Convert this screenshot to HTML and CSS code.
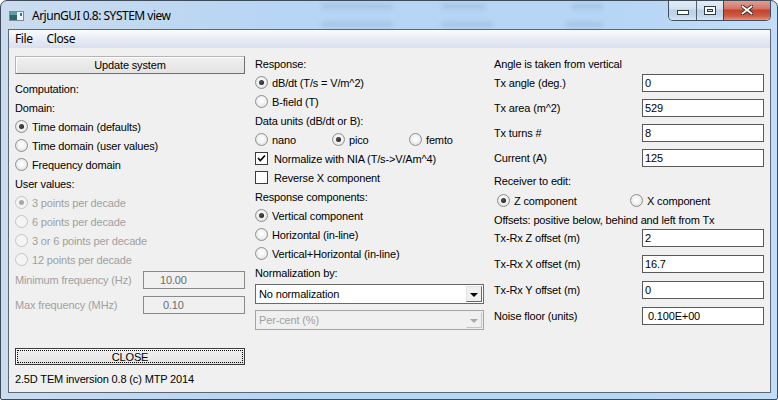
FILE: index.html
```html
<!DOCTYPE html>
<html lang="en">
<head>
    <meta charset="UTF-8">
    <title>ArjunGUI 0.8: SYSTEM view</title>
    <link rel="stylesheet" href="styles.css">
</head>
<body>
    <div class="window">
        <div class="titlebar">
            <svg class="app-icon" width="15" height="10" viewBox="0 0 15 10">
                <rect x="0.5" y="0.5" width="14" height="9" fill="#eef2f6" stroke="#7d8a97"/>
                <rect x="1" y="1" width="7" height="8" fill="#2f6470"/>
                <rect x="1" y="1" width="7" height="3" fill="#5f9ca4"/>
                <rect x="11" y="2" width="2" height="3" fill="#2a6fd6"/>
            </svg>
            <span class="title">ArjunGUI 0.8: SYSTEM view</span>
            <span class="ghost g1"></span>
            <span class="ghost g2"></span>
            <span class="ghost g3"></span>
            <span class="ghost g4"></span>
            <span class="ghost g5"></span>
            <span class="ghost g6"></span>
            <div class="caption">
                <div class="cap cap-min">
                    <svg width="12" height="5" viewBox="0 0 12 5"><rect x="0.5" y="0.5" width="11" height="4" fill="#fff" stroke="#2d3a48"/></svg>
                </div>
                <div class="cap cap-max">
                    <svg width="12" height="9" viewBox="0 0 12 9"><rect x="0.5" y="0.5" width="11" height="8" fill="#fff" stroke="#2d3a48"/><rect x="3.5" y="3.5" width="5" height="2" fill="#c9dbee" stroke="#2d3a48"/></svg>
                </div>
                <div class="cap cap-close">
                    <svg width="12" height="10" viewBox="0 0 12 10"><path d="M1.5 1.5 L10.5 8.5 M10.5 1.5 L1.5 8.5" stroke="#3a2220" stroke-width="3.6" stroke-linecap="square"/><path d="M1.5 1.5 L10.5 8.5 M10.5 1.5 L1.5 8.5" stroke="#fff" stroke-width="1.8" stroke-linecap="square"/></svg>
                </div>
            </div>
        </div>

        <div class="client">
            <div class="menubar">
                <span class="menu-item">File</span>
                <span class="menu-item">Close</span>
            </div>

            <div class="content">
                <div class="col col-left">
                    <div class="btn btn-update">Update system</div>
                    <div class="row first">Computation:</div>
                    <div class="row">Domain:</div>
                    <div class="row"><span class="rb on"></span>Time domain (defaults)</div>
                    <div class="row"><span class="rb"></span>Time domain (user values)</div>
                    <div class="row"><span class="rb"></span>Frequency domain</div>
                    <div class="row">User values:</div>
                    <div class="row dim"><span class="rb on dis"></span>3 points per decade</div>
                    <div class="row dim"><span class="rb dis"></span>6 points per decade</div>
                    <div class="row dim"><span class="rb dis"></span>3 or 6 points per decade</div>
                    <div class="row dim"><span class="rb dis"></span>12 points per decade</div>
                    <div class="field field-first">
                        <span class="flabel dim">Minimum frequency (Hz)</span>
                        <span class="box box-dis">10.00</span>
                    </div>
                    <div class="field">
                        <span class="flabel dim">Max frequency (MHz)</span>
                        <span class="box box-dis">&nbsp;0.10</span>
                    </div>
                    <div class="btn btn-close"><span>CLOSE</span></div>
                    <div class="row footer">2.5D TEM inversion 0.8 (c) MTP 2014</div>
                </div>

                <div class="col col-mid">
                    <div class="row">Response:</div>
                    <div class="row"><span class="rb on"></span>dB/dt (T/s = V/m^2)</div>
                    <div class="row"><span class="rb"></span>B-field (T)</div>
                    <div class="row">Data units (dB/dt or B):</div>
                    <div class="row">
                        <span class="opt opt-nano"><span class="rb"></span>nano</span>
                        <span class="opt opt-pico"><span class="rb on"></span>pico</span>
                        <span class="opt"><span class="rb"></span>femto</span>
                    </div>
                    <div class="row"><span class="cb on"><svg width="11" height="11" viewBox="0 0 11 11"><path d="M2 5 L4.3 7.5 L9 2.5" fill="none" stroke="#000" stroke-width="1.6"/></svg></span>Normalize with NIA (T/s-&gt;V/Am^4)</div>
                    <div class="row"><span class="cb"></span>Reverse X component</div>
                    <div class="row">Response components:</div>
                    <div class="row"><span class="rb on"></span>Vertical component</div>
                    <div class="row"><span class="rb"></span>Horizontal (in-line)</div>
                    <div class="row"><span class="rb"></span>Vertical+Horizontal (in-line)</div>
                    <div class="row">Normalization by:</div>
                    <div class="sel sel-first">
                        <span>No normalization</span>
                        <span class="arrow"></span>
                    </div>
                    <div class="sel sel-dis">
                        <span>Per-cent (%)</span>
                        <span class="arrow"></span>
                    </div>
                </div>

                <div class="col col-right">
                    <div class="row">Angle is taken from vertical</div>
                    <div class="field wide field-tx">
                        <span class="flabel">Tx angle (deg.)</span>
                        <span class="box">0</span>
                    </div>
                    <div class="field wide">
                        <span class="flabel">Tx area (m^2)</span>
                        <span class="box">529</span>
                    </div>
                    <div class="field wide">
                        <span class="flabel">Tx turns #</span>
                        <span class="box">8</span>
                    </div>
                    <div class="field wide">
                        <span class="flabel">Current (A)</span>
                        <span class="box">125</span>
                    </div>
                    <div class="row receiver">Receiver to edit:</div>
                    <div class="row rx-row">
                        <span class="opt opt-z"><span class="rb on"></span>Z component</span>
                        <span class="opt"><span class="rb"></span>X component</span>
                    </div>
                    <div class="row">Offsets: positive below, behind and left from Tx</div>
                    <div class="field wide field-off">
                        <span class="flabel">Tx-Rx Z offset (m)</span>
                        <span class="box">2</span>
                    </div>
                    <div class="field wide field-gap">
                        <span class="flabel">Tx-Rx X offset (m)</span>
                        <span class="box">16.7</span>
                    </div>
                    <div class="field wide field-gap">
                        <span class="flabel">Tx-Rx Y offset (m)</span>
                        <span class="box">0</span>
                    </div>
                    <div class="field wide field-gap">
                        <span class="flabel">Noise floor (units)</span>
                        <span class="box">&nbsp;0.100E+00</span>
                    </div>
                </div>
            </div>
        </div>
    </div>
</body>
</html>
```

FILE: styles.css
```css
body {
    margin: 0;
    font-family: "Liberation Sans", Arial, sans-serif;
    font-size: 11px;
    color: #000;
    background: #fff;
}

/* window frame */

.window {
    width: 778px;
    height: 400px;
    box-sizing: border-box;
    border: 1px solid #3e4b5a;
    border-radius: 7px 7px 2px 2px;
    background: linear-gradient(to right, #cbdcee, #b7d5f4 35%, #b6d6f5 80%, #c4ddf6);
    display: flex;
    flex-direction: column;
    overflow: hidden;
}

.titlebar {
    position: relative;
    height: 28px;
    flex: none;
    display: flex;
    align-items: flex-start;
}

.app-icon {
    margin: 10px 0 0 8px;
}

.title {
    margin: 6px 0 0 8px;
    font-family: "Noto Sans", sans-serif;
    font-size: 12px;
    letter-spacing: -0.5px;
    line-height: 17px;
}

.ghost {
    position: absolute;
    height: 5px;
    border-radius: 3px;
    background: rgba(100, 130, 170, 0.2);
    filter: blur(2px);
}

.g1 { left: 320px; top: 3px; width: 72px; }
.g2 { left: 320px; top: 21px; width: 72px; }
.g3 { left: 440px; top: 3px; width: 45px; }
.g4 { left: 440px; top: 21px; width: 52px; }
.g5 { left: 570px; top: 3px; width: 32px; }
.g6 { left: 565px; top: 21px; width: 37px; }

.caption {
    margin-left: auto;
    margin-right: 6px;
    margin-top: -1px;
    display: flex;
    border: 1px solid #3f4e60;
    border-top: none;
    border-radius: 0 0 5px 5px;
    overflow: hidden;
}

.cap {
    height: 20px;
    display: flex;
    align-items: center;
    justify-content: center;
    background: linear-gradient(#e4edf7, #d3e1f0 45%, #bccfe6 50%, #c3d7ec 80%, #d6e6f6);
}

.cap-min {
    width: 27px;
}

.cap-min svg {
    margin-top: 5px;
}

.cap-max {
    width: 26px;
    border-left: 1px solid #4f5f72;
}

.cap-close {
    width: 46px;
    border-left: 1px solid #5a3a3a;
    background: linear-gradient(#e4a497, #d27462 45%, #c2432f 50%, #cf5a41 80%, #e79280);
}

/* client area */

.client {
    flex: 1;
    margin: 0 6px 6px 7px;
    border: 1px solid #5d6876;
    background: #f0f0f0;
    display: flex;
    flex-direction: column;
}

.menubar {
    height: 18px;
    flex: none;
    display: flex;
    font-family: "Noto Sans", sans-serif;
    font-size: 12px;
    letter-spacing: -0.4px;
    line-height: 18px;
    background: linear-gradient(#fbfcfe, #e8ecf5 50%, #d9e0ee);
}

.menu-item {
    margin-left: 6px;
}

.menu-item + .menu-item {
    margin-left: 14px;
}

.content {
    flex: 1;
    display: grid;
    grid-template-columns: 230px 229px 1fr;
    column-gap: 10px;
    padding: 0 6px 0 6px;
    letter-spacing: -0.15px;
}

.col {
    display: flex;
    flex-direction: column;
}

.col-left {
    padding-top: 8px;
}

.col-mid,
.col-right {
    padding-top: 6px;
}

.row {
    height: 19px;
    display: flex;
    align-items: center;
    white-space: nowrap;
}

.row.first {
    margin-top: 5px;
}

.dim {
    color: #a0a0a0;
}

/* radio buttons and check boxes */

.rb {
    width: 13px;
    height: 13px;
    box-sizing: border-box;
    flex: none;
    border-radius: 50%;
    border: 1px solid #8e8f8f;
    background: radial-gradient(circle at 50% 45%, #ffffff 0, #f3f3f3 45%, #d2d2d2 100%);
    display: inline-flex;
    align-items: center;
    justify-content: center;
    margin-right: 4px;
}

.rb.on::after {
    content: "";
    width: 5px;
    height: 5px;
    border-radius: 50%;
    background: radial-gradient(circle at 40% 40%, #555, #111);
}

.rb.dis {
    border-color: #c4c4c4;
    background: #f4f4f4;
}

.rb.dis.on::after {
    background: #a8a8a8;
}

.cb {
    width: 13px;
    height: 13px;
    box-sizing: border-box;
    flex: none;
    border: 1px solid #3c3c3c;
    background: #fff;
    display: inline-flex;
    align-items: center;
    justify-content: center;
    margin-right: 6px;
}

.opt {
    display: flex;
    align-items: center;
}

.opt-nano,
.opt-pico {
    width: 77px;
}

.opt-z {
    width: 133px;
    margin-left: 3px;
}

.rx-row {
    margin-top: 1px;
}

.receiver {
    margin-top: 4px;
}

/* buttons */

.btn {
    box-sizing: border-box;
    display: flex;
    align-items: center;
    justify-content: center;
    background: linear-gradient(#f0f0f0, #e3e3e3);
    border: 1px solid;
    border-color: #b4b4b4 #6e6e6e #6e6e6e #b4b4b4;
    box-shadow: inset 1px 1px 0 #fff;
}

.btn-update {
    height: 18px;
}

.btn-close {
    height: 17px;
    margin-top: 34px;
    border-color: #3a3a3a;
    outline: 1px dotted #000;
    outline-offset: -3px;
}

.footer {
    margin-top: 4px;
}

/* edit fields */

.field {
    height: 18px;
    display: flex;
    align-items: center;
    margin-top: 7px;
}

.field-first {
    margin-top: 2px;
}

.flabel {
    width: 128px;
    flex: none;
    white-space: nowrap;
}

.wide .flabel {
    width: 148px;
}

.field-tx {
    margin-top: 1px;
}

.field-off {
    margin-top: 0;
}

.field-gap {
    margin-top: 8px;
}

.box {
    flex: 1;
    height: 18px;
    box-sizing: border-box;
    border: 1px solid #595959;
    background: #fff;
    padding-left: 2px;
    line-height: 16px;
    white-space: nowrap;
}

.box-dis {
    background: #f0f0f0;
    border-color: #8a8a8a;
    color: #6d6d6d;
    padding-left: 16px;
}

/* drop-down lists */

.sel {
    height: 20px;
    box-sizing: border-box;
    border: 1px solid #6a6a6a;
    background: #fff;
    display: flex;
    align-items: center;
    padding-left: 3px;
    margin-top: 6px;
}

.sel-first {
    margin-top: 2px;
}

.arrow {
    margin-left: auto;
    margin-right: 1px;
    width: 16px;
    height: 16px;
    box-sizing: border-box;
    border: 1px solid;
    border-color: #e3e3e3 #696969 #696969 #e3e3e3;
    background: #f0f0f0;
    display: flex;
    align-items: center;
    justify-content: center;
}

.arrow::after {
    content: "";
    border-left: 4px solid transparent;
    border-right: 4px solid transparent;
    border-top: 4px solid #000;
    margin-top: 1px;
}

.sel-dis {
    background: #f0f0f0;
    border-color: #a5a5a5;
    color: #a0a0a0;
}

.sel-dis .arrow {
    border-color: #f0f0f0 #c4c4c4 #c4c4c4 #f0f0f0;
}

.sel-dis .arrow::after {
    border-top-color: #a8a8a8;
}
```
